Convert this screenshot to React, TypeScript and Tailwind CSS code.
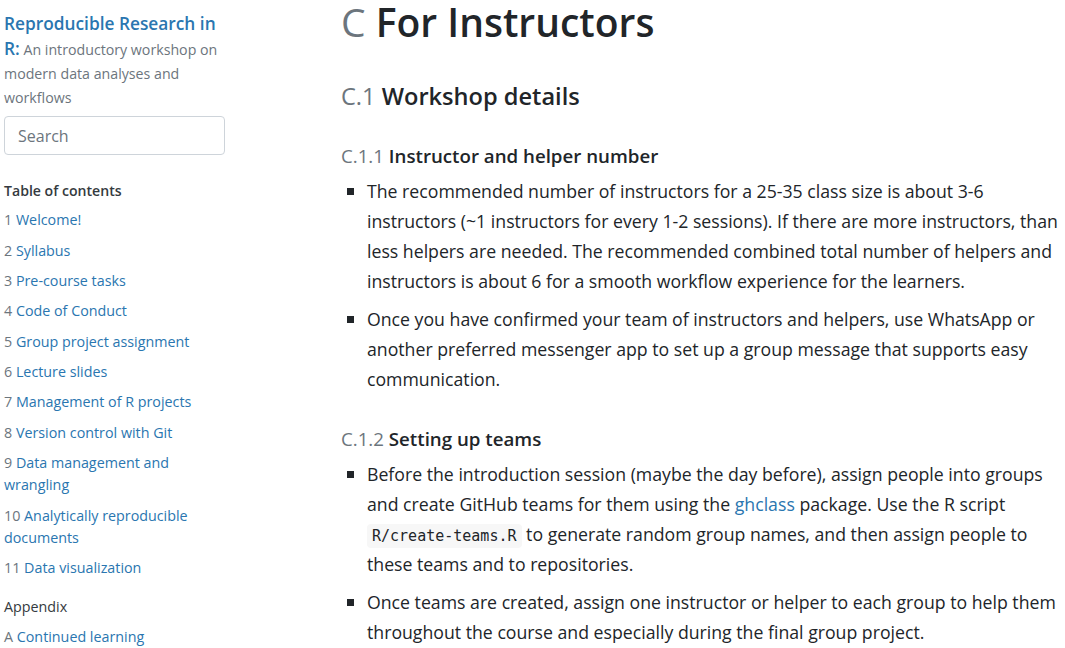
import React from "react";

const toc: { num: string; title: string }[] = [
  { num: "1", title: "Welcome!" },
  { num: "2", title: "Syllabus" },
  { num: "3", title: "Pre-course tasks" },
  { num: "4", title: "Code of Conduct" },
  { num: "5", title: "Group project assignment" },
  { num: "6", title: "Lecture slides" },
  { num: "7", title: "Management of R projects" },
  { num: "8", title: "Version control with Git" },
  { num: "9", title: "Data management and wrangling" },
  { num: "10", title: "Analytically reproducible documents" },
  { num: "11", title: "Data visualization" },
];

function Bullet({ children }: { children: React.ReactNode }) {
  return (
    <li className="relative mb-[8px] pl-[26px]">
      <span className="absolute left-[6px] top-[12px] h-[7px] w-[7px] bg-[#212529]" />
      {children}
    </li>
  );
}

export default function App() {
  return (
    <div
      className="flex min-h-screen bg-white text-[#212529]"
      style={{ fontFamily: '"Open Sans", "Noto Sans", sans-serif' }}
    >
      <aside className="w-[341px] shrink-0 pl-[4px] pr-[116px]">
        <h1 className="mt-[12px] text-[14.2px] leading-[24px] text-[#6c757d]">
          <a className="text-[17.3px] font-semibold text-[#2a76b0]" href="#">
            Reproducible Research in R:
          </a>{" "}
          An introductory workshop on modern data analyses and workflows
        </h1>
        <input
          placeholder="Search"
          className="mt-[6px] h-[39px] w-[221px] rounded-[4px] border border-[#ced4da] px-[13px] text-[16px] placeholder:text-[#6c757d] outline-none"
        />
        <h2 className="mt-[25px] text-[14.1px] font-semibold leading-[22px] text-[#343a40]">
          Table of contents
        </h2>
        <ul className="mt-[3px] text-[14.3px] leading-[22px]">
          {toc.map((t) => (
            <li key={t.num} className="py-[4.2px]">
              <span className="text-[#6c757d]">{t.num}</span>{" "}
              <a className="text-[#2a76b0]" href="#">
                {t.title}
              </a>
            </li>
          ))}
        </ul>
        <div className="mt-[9px] py-[4px] text-[14.3px] leading-[22px] text-[#343a40]">
          Appendix
        </div>
        <div className="py-[4px] text-[14.3px] leading-[22px]">
          <span className="text-[#6c757d]">A</span>{" "}
          <a className="text-[#2a76b0]" href="#">
            Continued learning
          </a>
        </div>
      </aside>

      <main className="min-w-0 flex-1">
        <h1 className="-mt-[6px] text-[39px] font-semibold leading-[56px]">
          <span className="font-normal text-[#6c757d]">C</span> For Instructors
        </h1>

        <h2 className="mt-[30px] text-[23.6px] font-semibold leading-[32px]">
          <span className="font-normal text-[#6c757d]">C.1</span> Workshop details
        </h2>

        <h3 className="mt-[31px] text-[18.7px] font-semibold leading-[26px]">
          <span className="font-normal text-[#6c757d]">C.1.1</span> Instructor and helper number
        </h3>
        <ul className="mt-[7px] text-[17.7px] leading-[30px]">
          <Bullet>
            The recommended number of instructors for a 25-35 class size is about 3-6
            instructors (~1 instructors for every 1-2 sessions). If there are more
            instructors, than less helpers are needed. The recommended combined total
            number of helpers and instructors is about 6 for a smooth workflow
            experience for the learners.
          </Bullet>
          <Bullet>
            Once you have confirmed your team of instructors and helpers, use WhatsApp
            or another preferred messenger app to set up a group message that supports
            easy communication.
          </Bullet>
        </ul>

        <h3 className="mt-[32px] text-[18.7px] font-semibold leading-[26px]">
          <span className="font-normal text-[#6c757d]">C.1.2</span> Setting up teams
        </h3>
        <ul className="mt-[7px] text-[17.7px] leading-[30px]">
          <Bullet>
            Before the introduction session (maybe the day before), assign people into
            groups and create GitHub teams for them using the{" "}
            <a className="text-[#2a76b0]" href="#">
              ghclass
            </a>{" "}
            package. Use the R script{" "}
            <code
              className="whitespace-nowrap rounded-[4px] bg-[#f7f7f7] px-[5px] py-[3px] text-[15px] leading-[18px]"
              style={{ fontFamily: '"DejaVu Sans Mono", "Liberation Mono", monospace' }}
            >
              R/create-teams.R
            </code>{" "}
            to generate random group names, and then assign people to these teams and
            to repositories.
          </Bullet>
          <Bullet>
            Once teams are created, assign one instructor or helper to each group to
            help them throughout the course and especially during the final group
            project.
          </Bullet>
        </ul>
      </main>
    </div>
  );
}
